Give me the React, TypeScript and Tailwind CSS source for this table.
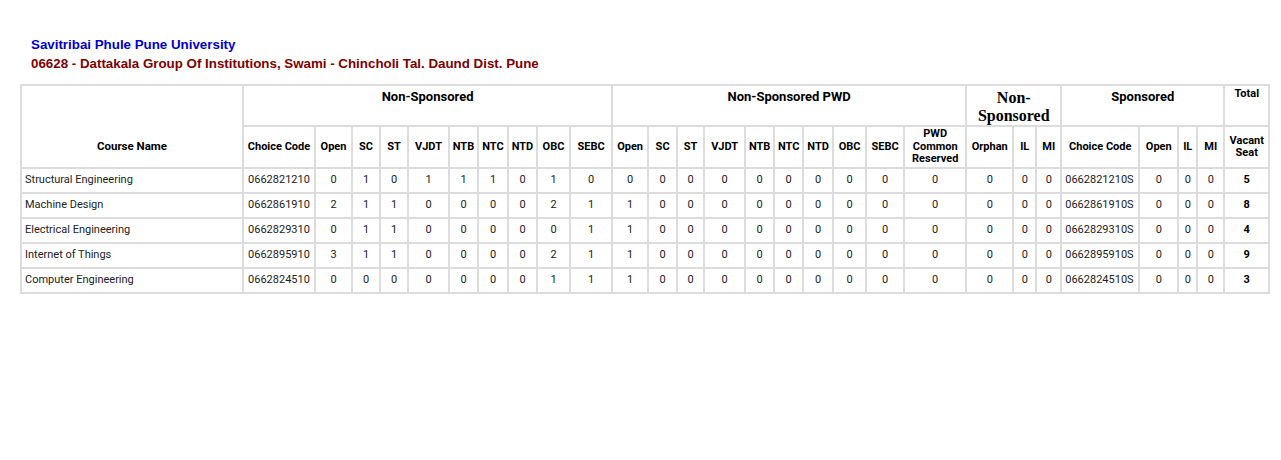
import React from 'react'

const cols = [222, 72, 37, 28, 28, 41, 29, 30, 29, 33, 42, 36, 29, 27, 41, 29, 29, 30, 33, 38, 62, 47, 23, 25, 78, 39, 19, 27, 45]

const nsHeads = ['Open', 'SC', 'ST', 'VJDT', 'NTB', 'NTC', 'NTD', 'OBC', 'SEBC']

interface Row {
  name:  string
  code:  string
  ns:    number[]
  pwd:   number[]
  total: number
}

const rows: Row[] = [
  { name: 'Structural Engineering', code: '0662821210', ns: [0, 1, 0, 1, 1, 1, 0, 1, 0], pwd: [0, 0, 0, 0, 0, 0, 0, 0, 0], total: 5 },
  { name: 'Machine Design',         code: '0662861910', ns: [2, 1, 1, 0, 0, 0, 0, 2, 1], pwd: [1, 0, 0, 0, 0, 0, 0, 0, 0], total: 8 },
  { name: 'Electrical Engineering', code: '0662829310', ns: [0, 1, 1, 0, 0, 0, 0, 0, 1], pwd: [1, 0, 0, 0, 0, 0, 0, 0, 0], total: 4 },
  { name: 'Internet of Things',     code: '0662895910', ns: [3, 1, 1, 0, 0, 0, 0, 2, 1], pwd: [1, 0, 0, 0, 0, 0, 0, 0, 0], total: 9 },
  { name: 'Computer Engineering',   code: '0662824510', ns: [0, 0, 0, 0, 0, 0, 0, 1, 1], pwd: [1, 0, 0, 0, 0, 0, 0, 0, 0], total: 3 },
]

// base cell; vertical alignment added per cell so classes don't fight
const base = 'border-2 border-[#dcdcdc] px-0 text-center whitespace-nowrap'
const cell = `${base} align-middle`
const group = `${base} align-top pt-[1px] text-[13px] text-black`

export default function App() {
  return (
    <div className="min-h-[460px] bg-white pt-[35px] text-[#222] font-['Liberation_Sans',Arial,sans-serif]">
      {/* Heading */}
      <div className="pl-[31px] text-[13.33px] font-bold leading-[19px]">
        <div className="text-[#0000cc]">Savitribai Phule Pune University</div>
        <div className="text-[#800000]">06628 - Dattakala Group Of Institutions, Swami - Chincholi Tal. Daund Dist. Pune</div>
      </div>

      <table className="ml-[20px] mt-[11px] w-[1248px] table-fixed border-collapse border-2 border-[#dcdcdc] font-['Roboto',sans-serif] text-[11px]">
        <colgroup>
          {cols.map((w, i) => <col key={i} style={{ width: w }} />)}
        </colgroup>
        <thead>
          <tr className="h-[40px]">
            <th rowSpan={2} className={`${base} align-bottom pb-[12px] text-[11.5px] font-bold text-black`}>Course Name</th>
            <th colSpan={10} className={group}>Non-Sponsored</th>
            <th colSpan={10} className={group}>Non-Sponsored PWD</th>
            <th colSpan={3} className={`${base} align-top pt-[3px] font-['Liberation_Serif','Times_New_Roman',serif] text-[16px] leading-[18px] text-black`}>Non-<br />Sponsored</th>
            <th colSpan={4} className={group}>Sponsored</th>
            <th className={`${base} align-top pt-0 text-black`}>Total</th>
          </tr>
          <tr className="h-[42px] font-bold text-black">
            <th className={cell}>Choice Code</th>
            {nsHeads.map((h, i) => <th key={`a${i}`} className={cell}>{h}</th>)}
            {nsHeads.map((h, i) => <th key={`b${i}`} className={cell}>{h}</th>)}
            <th className={`${cell} leading-[12.5px]`}>PWD<br />Common<br />Reserved</th>
            <th className={cell}>Orphan</th>
            <th className={cell}>IL</th>
            <th className={cell}>MI</th>
            <th className={cell}>Choice Code</th>
            <th className={cell}>Open</th>
            <th className={cell}>IL</th>
            <th className={cell}>MI</th>
            <th className={`${cell} leading-[12.5px]`}>Vacant<br />Seat</th>
          </tr>
        </thead>
        <tbody>
          {rows.map((r) => (
            <tr key={r.code} className="h-[25px]">
              <td className={`${cell} text-left pl-[3px]`}>{r.name}</td>
              <td className={cell}>{r.code}</td>
              {r.ns.map((v, i) => <td key={`n${i}`} className={cell}>{v}</td>)}
              {r.pwd.map((v, i) => <td key={`p${i}`} className={cell}>{v}</td>)}
              <td className={cell}>0</td>
              <td className={cell}>0</td>
              <td className={cell}>0</td>
              <td className={cell}>0</td>
              <td className={`${cell} text-left pl-[3px]`}>{r.code}S</td>
              <td className={cell}>0</td>
              <td className={cell}>0</td>
              <td className={cell}>0</td>
              <td className={`${cell} font-bold text-black`}>{r.total}</td>
            </tr>
          ))}
        </tbody>
      </table>
    </div>
  )
}
